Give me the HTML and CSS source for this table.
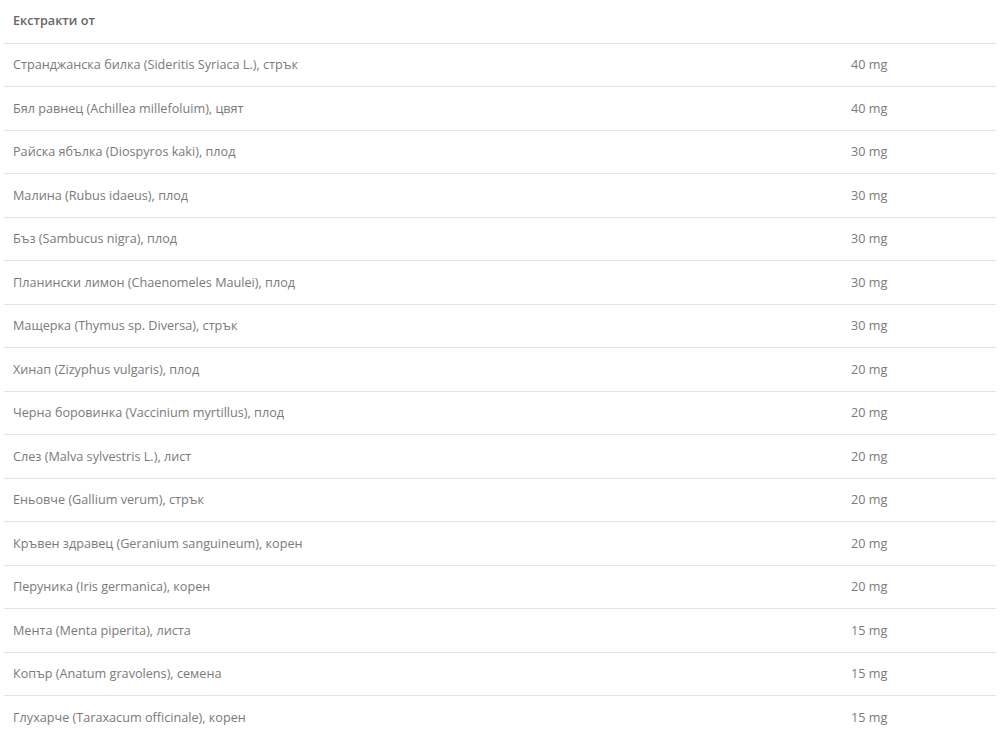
FILE: index.html
```html
<!DOCTYPE html>
<html lang="bg">
<head>
  <meta charset="UTF-8" />
  <title>Състав</title>
  <link rel="stylesheet" href="styles.css">
</head>
<body>
  <table class="ingredients">
    <thead>
      <tr><th colspan="2">Екстракти от</th></tr>
    </thead>
    <tbody>
      <tr><td>Странджанска билка (Sideritis Syriaca L.), стрък</td><td class="amount">40 mg</td></tr>
      <tr><td>Бял равнец (Achillea millefoluim), цвят</td><td class="amount">40 mg</td></tr>
      <tr><td>Райска ябълка (Diospyros kaki), плод</td><td class="amount">30 mg</td></tr>
      <tr><td>Малина (Rubus idaeus), плод</td><td class="amount">30 mg</td></tr>
      <tr><td>Бъз (Sambucus nigra), плод</td><td class="amount">30 mg</td></tr>
      <tr><td>Планински лимон (Chaenomeles Maulei), плод</td><td class="amount">30 mg</td></tr>
      <tr><td>Мащерка (Thymus sp. Diversa), стрък</td><td class="amount">30 mg</td></tr>
      <tr><td>Хинап (Zizyphus vulgaris), плод</td><td class="amount">20 mg</td></tr>
      <tr><td>Черна боровинка (Vaccinium myrtillus), плод</td><td class="amount">20 mg</td></tr>
      <tr><td>Слез (Malva sylvestris L.), лист</td><td class="amount">20 mg</td></tr>
      <tr><td>Еньовче (Gallium verum), стрък</td><td class="amount">20 mg</td></tr>
      <tr><td>Кръвен здравец (Geranium sanguineum), корен</td><td class="amount">20 mg</td></tr>
      <tr><td>Перуника (Iris germanica), корен</td><td class="amount">20 mg</td></tr>
      <tr><td>Мента (Menta piperita), листа</td><td class="amount">15 mg</td></tr>
      <tr><td>Копър (Anatum gravolens), семена</td><td class="amount">15 mg</td></tr>
      <tr><td>Глухарче (Taraxacum officinale), корен</td><td class="amount">15 mg</td></tr>
    </tbody>
  </table>
</body>
</html>
```

FILE: styles.css
```css
body {
  margin: 0;
  padding: 0 12px 0 4px;
  background-color: #ffffff;
  font-family: 'Open Sans', sans-serif;
  font-size: 12.65px;
  color: #7a7a7a;
}

.ingredients {
  width: 100%;
  border-collapse: collapse;
}

.ingredients th,
.ingredients td {
  text-align: left;
  line-height: 19.5px;
  padding: 11.5px 9px 11.5px;
}

.ingredients th {
  font-weight: 600;
  color: #666666;
  padding-top: 11px;
  padding-bottom: 12px;
}

.ingredients td {
  border-top: 1px solid #e4e4e4;
}

.ingredients .amount {
  width: 136px;
}
```
